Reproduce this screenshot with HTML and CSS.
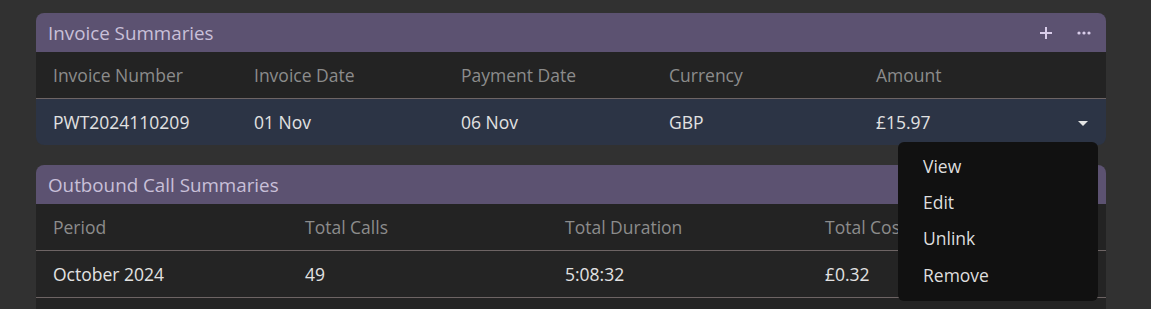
FILE: index.html
```html
<!DOCTYPE html>
<html lang="en">
<head>
    <meta charset="UTF-8">
    <title>Summaries</title>
    <link rel="stylesheet" href="styles.css">
</head>
<body>

    <div class="panel">
        <div class="panel-head">
            <span class="panel-title">Invoice Summaries</span>
            <div class="panel-tools">
                <svg class="tool" width="14" height="14" viewBox="0 0 14 14"><path d="M7 1v12M1 7h12" stroke="#d9cdea" stroke-width="2"/></svg>
                <svg class="tool" width="14" height="14" viewBox="0 0 14 14"><circle cx="2" cy="7" r="1.6" fill="#d9cdea"/><circle cx="7" cy="7" r="1.6" fill="#d9cdea"/><circle cx="12" cy="7" r="1.6" fill="#d9cdea"/></svg>
            </div>
        </div>
        <table class="grid invoices">
            <thead>
                <tr><th>Invoice Number</th><th>Invoice Date</th><th>Payment Date</th><th>Currency</th><th>Amount</th><th class="act"></th></tr>
            </thead>
            <tbody>
                <tr class="selected">
                    <td>PWT2024110209</td><td>01 Nov</td><td>06 Nov</td><td>GBP</td><td>£15.97</td>
                    <td class="act"><svg width="10" height="6" viewBox="0 0 10 6"><path d="M0 0h10L5 5z" fill="#e4e4e4"/></svg></td>
                </tr>
            </tbody>
        </table>
    </div>

    <div class="panel">
        <div class="panel-head">
            <span class="panel-title">Outbound Call Summaries</span>
        </div>
        <table class="grid calls">
            <thead>
                <tr><th>Period</th><th>Total Calls</th><th>Total Duration</th><th>Total Cost</th></tr>
            </thead>
            <tbody>
                <tr><td>October 2024</td><td>49</td><td>5:08:32</td><td>£0.32</td></tr>
                <tr class="filler"><td></td><td></td><td></td><td></td></tr>
            </tbody>
        </table>
    </div>

    <ul class="menu">
        <li>View</li>
        <li>Edit</li>
        <li>Unlink</li>
        <li>Remove</li>
    </ul>

</body>
</html>
```

FILE: styles.css
```css
html { height: 309px; overflow: hidden; }
body {
    margin: 0;
    padding: 13px 45px 0 36px;
    background: #313131;
    font-family: "Open Sans", "Noto Sans", sans-serif;
    color: #e2e2e2;
}

.panel {
    border-radius: 8px;
    overflow: hidden;
    margin-bottom: 20px;
}

.panel-head {
    display: flex;
    align-items: center;
    justify-content: space-between;
    height: 39px;
    padding: 0 15px 0 12px;
    background: #5c5271;
}
.panel-title { font-size: 18.8px; color: #c9c0d9; }
.panel-tools { display: flex; align-items: center; gap: 24px; }
.tool { display: block; }

.grid {
    width: 100%;
    border-collapse: collapse;
    font-size: 17.5px;
    table-layout: fixed;
}
.grid th, .grid td { box-sizing: border-box; }
.grid th {
    height: 46px;
    padding: 0 17px;
    text-align: left;
    font-weight: normal;
    color: #8c8c8c;
    background: #232323;
    border-bottom: 1px solid #6d6464;
}
.grid td {
    height: 47px;
    padding: 0 17px;
    background: #242424;
    border-bottom: 1px solid #6d6464;
}
.grid tr.selected td { background: #2c3445; border-bottom: none; height: 47px; }
.grid tr.filler td { height: 20px; border-bottom: none; }

.invoices th:nth-child(1) { width: 201px; }
.invoices th:nth-child(2) { width: 207px; }
.invoices th:nth-child(3) { width: 208px; }
.invoices th:nth-child(4) { width: 207px; }
.invoices th.act { width: 45px; }
.calls th:nth-child(1) { width: 252px; }
.calls th:nth-child(2) { width: 260px; }
.calls th:nth-child(3) { width: 260px; }
.grid td.act { text-align: right; padding-right: 20px; }
.grid td.act svg { display: inline-block; vertical-align: middle; }

/* Row action menu */
.menu {
    position: absolute;
    top: 142px;
    left: 898px;
    width: 200px;
    margin: 0;
    padding: 6px 0 9px;
    list-style: none;
    background: #111111;
    border-radius: 6px;
    font-size: 17.5px;
    color: #dedede;
}
.menu li { height: 36px; line-height: 36px; padding-left: 25px; }
.menu li:last-child { line-height: 38px; }
```
